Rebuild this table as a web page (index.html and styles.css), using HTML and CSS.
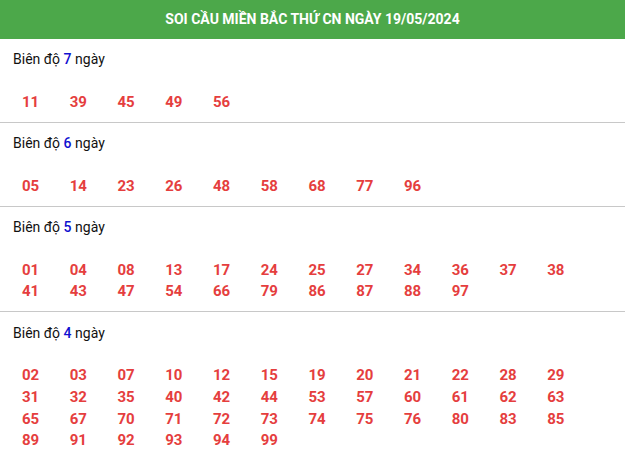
FILE: index.html
```html
<!DOCTYPE html>
<html lang="vi">
<head>
<meta charset="utf-8">
<link rel="stylesheet" href="styles.css">
</head>
<body>
<div class="box">
  <div class="title">SOI CẦU MIỀN BẮC THỨ CN NGÀY 19/05/2024</div>
  <div class="section">
    <div class="label">Biên độ <b>7</b> ngày</div>
    <div class="nums"><span>11</span><span>39</span><span>45</span><span>49</span><span>56</span></div>
  </div>
  <div class="section">
    <div class="label">Biên độ <b>6</b> ngày</div>
    <div class="nums"><span>05</span><span>14</span><span>23</span><span>26</span><span>48</span><span>58</span><span>68</span><span>77</span><span>96</span></div>
  </div>
  <div class="section">
    <div class="label">Biên độ <b>5</b> ngày</div>
    <div class="nums"><span>01</span><span>04</span><span>08</span><span>13</span><span>17</span><span>24</span><span>25</span><span>27</span><span>34</span><span>36</span><span>37</span><span>38</span><span>41</span><span>43</span><span>47</span><span>54</span><span>66</span><span>79</span><span>86</span><span>87</span><span>88</span><span>97</span></div>
  </div>
  <div class="section">
    <div class="label">Biên độ <b>4</b> ngày</div>
    <div class="nums"><span>02</span><span>03</span><span>07</span><span>10</span><span>12</span><span>15</span><span>19</span><span>20</span><span>21</span><span>22</span><span>28</span><span>29</span><span>31</span><span>32</span><span>35</span><span>40</span><span>42</span><span>44</span><span>53</span><span>57</span><span>60</span><span>61</span><span>62</span><span>63</span><span>65</span><span>67</span><span>70</span><span>71</span><span>72</span><span>73</span><span>74</span><span>75</span><span>76</span><span>80</span><span>83</span><span>85</span><span>89</span><span>91</span><span>92</span><span>93</span><span>94</span><span>99</span></div>
  </div>
</div>
</body>
</html>
```
FILE: styles.css
```css
html, body {
  margin: 0;
  padding: 0;
  background: #fff;
}
body {
  font-family: Roboto, "Liberation Sans", Arial, sans-serif;
  color: #222;
}
.box {
  width: 625px;
}
.title {
  height: 38.5px;
  line-height: 38px;
  background: #4ca84a;
  color: #fff;
  font-weight: bold;
  font-size: 14px;
  text-align: center;
}
.section {
  padding: 9.5px 0 8.3px 0;
  border-bottom: 1px solid #c8c8c8;
}
.section:last-child {
  border-bottom: none;
}
.label {
  font-size: 14px;
  line-height: 22px;
  padding-left: 13px;
  color: #111;
}
.label b {
  color: #1010d0;
  font-weight: 500;
}
.nums {
  margin-top: 21.5px;
  display: grid;
  grid-template-columns: repeat(12, 47.75px);
  padding-left: 22px;
}
.nums span {
  font-size: 15px;
  font-weight: bold;
  line-height: 21.7px;
  color: #e53e3e;
}
```
